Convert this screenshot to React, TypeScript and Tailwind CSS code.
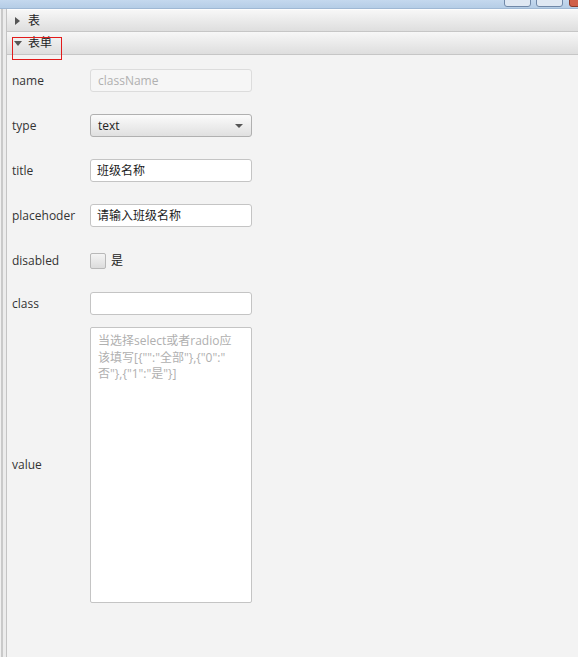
import React from "react";

const font = { fontFamily: '"Open Sans", "Noto Sans CJK SC", sans-serif' };

function Row({ label, children, className = "" }: { label: string; children: React.ReactNode; className?: string }) {
  return (
    <div className={`flex items-center ${className}`}>
      <div className="w-[78px] text-[12px] text-[#333]">{label}</div>
      {children}
    </div>
  );
}

export default function App() {
  return (
    <div className="w-[578px] h-[657px] bg-[#f3f3f3] flex flex-col overflow-hidden" style={font}>
      {/* 窗口标题栏 */}
      <div className="h-[9px] bg-gradient-to-b from-[#c4d8ee] to-[#b5cde6] relative shrink-0 border-b border-[#9fb8d4]">
        <div className="absolute left-[504px] top-[-4px] w-[27px] h-[11px] border border-[#7088a8] rounded-b-[3px] bg-[#dfe8f3]" />
        <div className="absolute left-[536px] top-[-4px] w-[27px] h-[11px] border border-[#7088a8] rounded-b-[3px] bg-[#dfe8f3]" />
        <div className="absolute left-[569px] top-[-4px] w-[20px] h-[11px] border border-[#8a3a2a] rounded-b-[3px] bg-[#d0604a]" />
      </div>

      <div className="flex flex-1">
        {/* 左侧边框 */}
        <div className="w-[7px] flex shrink-0">
          <div className="w-[1px] bg-[#f0f0f0]" />
          <div className="w-[2px] bg-[#c9c9c9]" />
          <div className="w-[3px] bg-[#ececec]" />
          <div className="w-[1px] bg-[#c4c4c4]" />
        </div>

        <div className="flex-1 flex flex-col">
          {/* 折叠头 */}
          <div className="h-[23px] flex items-center bg-gradient-to-b from-[#f7f7f7] to-[#dedede] border-b border-[#c6c6c6] border-t border-t-[#fdfdfd]">
            <span className="ml-[8px] w-0 h-0 border-y-[4px] border-y-transparent border-l-[5px] border-l-[#555]" />
            <span className="ml-[8px] text-[12px] text-[#222]">表</span>
          </div>
          <div className="h-[23px] flex items-center bg-gradient-to-b from-[#f7f7f7] to-[#dedede] border-b border-[#c6c6c6] relative">
            <span className="ml-[7px] w-0 h-0 border-x-[4px] border-x-transparent border-t-[5px] border-t-[#555]" />
            <span className="ml-[6px] text-[12px] text-[#222]">表单</span>
            <div className="absolute z-10 left-[5px] top-[5px] w-[50px] h-[23px] shadow-[inset_0_0_0_1px_#e21b1b]" />
          </div>

          {/* 表单 */}
          <div className="pl-[5px] pt-[14px] flex flex-col">
            <Row label="name">
              <div className="w-[162px] h-[23px] border border-[#dcdcdc] rounded-[3px] bg-[#f6f6f6] flex items-center px-[7px] text-[12px] text-[#b0b0b0]">
                className
              </div>
            </Row>
            <Row label="type" className="mt-[22px]">
              <div className="w-[162px] h-[23px] border border-[#b0b0b0] rounded-[3px] bg-gradient-to-b from-[#fbfbfb] to-[#e0e0e0] flex items-center justify-between pl-[7px] pr-[8px] text-[12px] text-[#222]">
                <span>text</span>
                <span className="w-0 h-0 border-x-[4px] border-x-transparent border-t-[4px] border-t-[#555]" />
              </div>
            </Row>
            <Row label="title" className="mt-[22px]">
              <div className="w-[162px] h-[23px] border border-[#c4c4c4] rounded-[3px] bg-white flex items-center px-[6px] text-[12px] text-[#222]">
                班级名称
              </div>
            </Row>
            <Row label="placehoder" className="mt-[22px]">
              <div className="w-[162px] h-[23px] border border-[#c4c4c4] rounded-[3px] bg-white flex items-center px-[6px] text-[12px] text-[#222]">
                请输入班级名称
              </div>
            </Row>
            <Row label="disabled" className="mt-[22px] h-[23px]">
              <div className="w-[16px] h-[16px] border border-[#b8b8b8] rounded-[2px] bg-gradient-to-b from-[#f4f4f4] to-[#dcdcdc]" />
              <span className="ml-[5px] text-[12px] text-[#222]">是</span>
            </Row>
            <Row label="class" className="mt-[20px]">
              <div className="w-[162px] h-[23px] border border-[#c4c4c4] rounded-[3px] bg-white" />
            </Row>
            <Row label="value" className="mt-[12px]">
              <div className="w-[162px] h-[276px] border border-[#c4c4c4] rounded-[2px] bg-white pl-[7px] pr-[6px] pt-[5px] text-[12px] leading-[16.5px] text-[#b0b0b0] whitespace-nowrap">
                <div>当选择select或者radio应</div>
                <div>{'该填写[{"":"全部"},{"0":"'}</div>
                <div>{'否"},{"1":"是"}]'}</div>
              </div>
            </Row>
          </div>
        </div>
      </div>
    </div>
  );
}
